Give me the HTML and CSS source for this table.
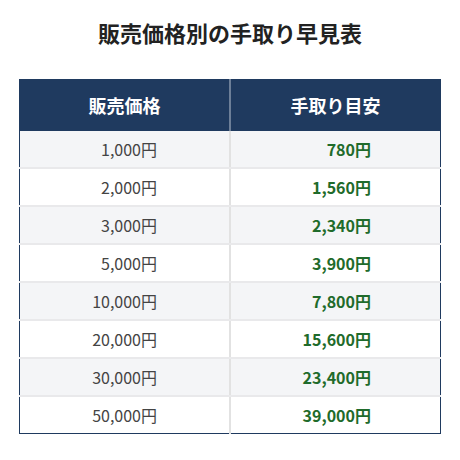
FILE: index.html
```html
<!DOCTYPE html>
<html lang="ja">
<head>
<meta charset="utf-8">
<link rel="stylesheet" href="styles.css">
</head>
<body>
<div class="wrap">
  <h1 class="title">販売価格別の手取り早見表</h1>
  <table class="tbl">
    <thead>
      <tr><th>販売価格</th><th>手取り目安</th></tr>
    </thead>
    <tbody>
      <tr><td class="price">1,000円</td><td class="net">780円</td></tr>
      <tr><td class="price">2,000円</td><td class="net">1,560円</td></tr>
      <tr><td class="price">3,000円</td><td class="net">2,340円</td></tr>
      <tr><td class="price">5,000円</td><td class="net">3,900円</td></tr>
      <tr><td class="price">10,000円</td><td class="net">7,800円</td></tr>
      <tr><td class="price">20,000円</td><td class="net">15,600円</td></tr>
      <tr><td class="price">30,000円</td><td class="net">23,400円</td></tr>
      <tr><td class="price">50,000円</td><td class="net">39,000円</td></tr>
    </tbody>
  </table>
</div>
</body>
</html>
```
FILE: styles.css
```css
html, body {
  margin: 0;
  padding: 0;
  background: #ffffff;
}
body {
  font-family: "Noto Sans CJK JP", "Noto Sans", sans-serif;
  color: #222;
}
.wrap {
  padding: 16px 19px 0;
}
.title {
  margin: 0 0 30px;
  font-size: 22px;
  line-height: 33px;
  font-weight: 700;
  text-align: center;
  color: #222;
}
.tbl {
  width: 422px;
  border-collapse: collapse;
  border: 1px solid #1f3a5f;
  table-layout: fixed;
}
.tbl th {
  background: #1f3a5f;
  color: #fff;
  font-size: 18px;
  font-weight: 700;
  line-height: 27px;
  padding: 12px 0;
  text-align: center;
}
.tbl th:first-child {
  border-right: 2px solid #6d7f98;
}
.tbl td {
  font-size: 16px;
  line-height: 20px;
  padding: 8px 0;
  text-align: right;
}
.tbl tbody tr:nth-child(odd) td {
  background: #f4f5f7;
}
.tbl tbody tr:not(:last-child) td {
  border-bottom: 2px solid #e9e9eb;
}
.tbl td.price {
  border-right: 2px solid #e2e2e2;
  color: #444;
  padding-right: 72px;
}
.tbl td.net {
  color: #1f6b2b;
  font-weight: 700;
  padding-right: 69px;
}
```
